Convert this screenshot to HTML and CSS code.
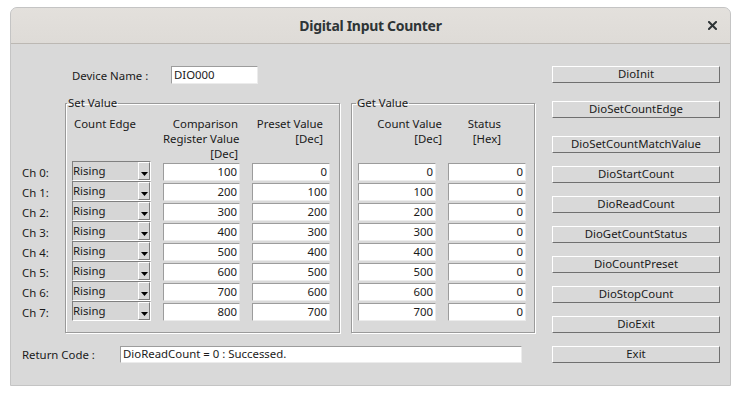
FILE: index.html
```html
<!DOCTYPE html>
<html>
<head>
<meta charset="utf-8">
<link rel="stylesheet" href="styles.css">
</head>
<body>
<div class="window">
  <div class="titlebar">
    <span></span>
    <span class="title">Digital Input Counter</span>
    <span class="close"><svg width="9" height="9" viewBox="0 0 9 9"><path d="M1 1 L8 8 M8 1 L1 8" stroke="#2e3436" stroke-width="2" stroke-linecap="square"/></svg></span>
  </div>
  <div class="body">
    <div class="main">
      <div class="device-row">
        <span class="device-label">Device Name :</span>
        <div class="field device-field">DIO000</div>
      </div>
      <div class="groups">
        <div class="channels">
          <div class="ch">Ch 0:</div>
          <div class="ch">Ch 1:</div>
          <div class="ch">Ch 2:</div>
          <div class="ch">Ch 3:</div>
          <div class="ch">Ch 4:</div>
          <div class="ch">Ch 5:</div>
          <div class="ch">Ch 6:</div>
          <div class="ch">Ch 7:</div>
        </div>
        <fieldset class="group set-group">
          <legend>Set Value</legend>
          <div class="grid set-grid">
            <div class="hdr hdr-edge">Count Edge</div>
            <div class="hdr hdr-comp">Comparison<br>Register Value<br>[Dec]</div>
            <div class="hdr hdr-preset">Preset Value<br>[Dec]</div>

            <div class="combo"><span class="combo-text">Rising</span><span class="combo-btn"><svg width="7" height="4" viewBox="0 0 7 4"><polygon points="0,0 7,0 3.5,4" fill="#000"/></svg></span></div>
            <div class="field num">100</div>
            <div class="field num">0</div>

            <div class="combo"><span class="combo-text">Rising</span><span class="combo-btn"><svg width="7" height="4" viewBox="0 0 7 4"><polygon points="0,0 7,0 3.5,4" fill="#000"/></svg></span></div>
            <div class="field num">200</div>
            <div class="field num">100</div>

            <div class="combo"><span class="combo-text">Rising</span><span class="combo-btn"><svg width="7" height="4" viewBox="0 0 7 4"><polygon points="0,0 7,0 3.5,4" fill="#000"/></svg></span></div>
            <div class="field num">300</div>
            <div class="field num">200</div>

            <div class="combo"><span class="combo-text">Rising</span><span class="combo-btn"><svg width="7" height="4" viewBox="0 0 7 4"><polygon points="0,0 7,0 3.5,4" fill="#000"/></svg></span></div>
            <div class="field num">400</div>
            <div class="field num">300</div>

            <div class="combo"><span class="combo-text">Rising</span><span class="combo-btn"><svg width="7" height="4" viewBox="0 0 7 4"><polygon points="0,0 7,0 3.5,4" fill="#000"/></svg></span></div>
            <div class="field num">500</div>
            <div class="field num">400</div>

            <div class="combo"><span class="combo-text">Rising</span><span class="combo-btn"><svg width="7" height="4" viewBox="0 0 7 4"><polygon points="0,0 7,0 3.5,4" fill="#000"/></svg></span></div>
            <div class="field num">600</div>
            <div class="field num">500</div>

            <div class="combo"><span class="combo-text">Rising</span><span class="combo-btn"><svg width="7" height="4" viewBox="0 0 7 4"><polygon points="0,0 7,0 3.5,4" fill="#000"/></svg></span></div>
            <div class="field num">700</div>
            <div class="field num">600</div>

            <div class="combo"><span class="combo-text">Rising</span><span class="combo-btn"><svg width="7" height="4" viewBox="0 0 7 4"><polygon points="0,0 7,0 3.5,4" fill="#000"/></svg></span></div>
            <div class="field num">800</div>
            <div class="field num">700</div>
          </div>
        </fieldset>
        <fieldset class="group get-group">
          <legend>Get Value</legend>
          <div class="grid get-grid">
            <div class="hdr hdr-count">Count Value<br>[Dec]</div>
            <div class="hdr hdr-status">Status<br>[Hex]</div>

            <div class="field num">0</div><div class="field num">0</div>
            <div class="field num">100</div><div class="field num">0</div>
            <div class="field num">200</div><div class="field num">0</div>
            <div class="field num">300</div><div class="field num">0</div>
            <div class="field num">400</div><div class="field num">0</div>
            <div class="field num">500</div><div class="field num">0</div>
            <div class="field num">600</div><div class="field num">0</div>
            <div class="field num">700</div><div class="field num">0</div>
          </div>
        </fieldset>
      </div>
      <div class="return-row">
        <span class="return-label">Return Code :</span>
        <div class="field return-field">DioReadCount = 0 : Successed.</div>
      </div>
    </div>
    <div class="buttons">
      <div class="btn">DioInit</div>
      <div class="btn wide-gap">DioSetCountEdge</div>
      <div class="btn wide-gap">DioSetCountMatchValue</div>
      <div class="btn">DioStartCount</div>
      <div class="btn">DioReadCount</div>
      <div class="btn">DioGetCountStatus</div>
      <div class="btn">DioCountPreset</div>
      <div class="btn">DioStopCount</div>
      <div class="btn">DioExit</div>
      <div class="btn">Exit</div>
    </div>
  </div>
</div>
</body>
</html>
```
FILE: styles.css
```css
* { box-sizing: border-box; }

html, body {
  margin: 0;
  padding: 0;
  background: #ffffff;
}

body {
  font-family: "Noto Sans", "DejaVu Sans", sans-serif;
  font-size: 11.4px;
  color: #1a1a1a;
}

.window {
  margin: 7px 0 0 10px;
  width: 721px;
  border: 1px solid #c4c4c4;
  border-radius: 7px 7px 0 0;
  overflow: hidden;
  background: #d9d9d9;
}

.titlebar {
  height: 36px;
  display: grid;
  grid-template-columns: 1fr auto 1fr;
  align-items: center;
  background: linear-gradient(#e3e0dc, #dedbd7);
  border-bottom: 1px solid #bcb8b3;
}

.title {
  font-family: "Noto Sans", sans-serif;
  font-weight: 700;
  font-size: 14px;
  letter-spacing: -0.3px;
  color: #2e3436;
  line-height: 16px;
}

.close {
  justify-self: end;
  margin-right: 13px;
  display: flex;
  align-items: center;
}

.body {
  display: flex;
  height: 341px;
}

.main {
  width: 540px;
  display: flex;
  flex-direction: column;
}

.field {
  background: #ffffff;
  border: 1px solid;
  border-color: #9c9c9c #ececec #ececec #9c9c9c;
  line-height: 15px;
  white-space: nowrap;
  overflow: hidden;
}

.device-row {
  margin-top: 22px;
  padding-left: 61px;
  display: flex;
  align-items: center;
}

.device-label {
  width: 99px;
}

.device-field {
  width: 87px;
  height: 18px;
  padding-left: 2px;
}

.groups {
  margin-top: 12px;
  display: flex;
  align-items: flex-start;
}

.channels {
  width: 54px;
  padding-left: 11px;
  padding-top: 67px;
}

.ch {
  height: 20px;
  line-height: 20px;
}

.group {
  margin: 0;
  min-width: 0;
  padding: 6px 9px 11px 6px;
  border: 1px solid #9a9a9a;
  box-shadow: 1px 1px 0 #ffffff, inset 1px 1px 0 #ffffff;
}

.group legend {
  padding: 0 1px;
  margin-left: -5px;
  line-height: 14px;
  font-size: 11.4px;
}

.get-group {
  margin-left: 11px;
  padding-right: 8px;
}

.get-group legend {
  margin-left: -2px;
}

.grid {
  display: grid;
  grid-template-rows: 45px repeat(8, 20px);
  column-gap: 12px;
}

.set-grid {
  grid-template-columns: 79px 77px 78px;
}

.get-grid {
  grid-template-columns: 78px 78px;
}

.hdr {
  line-height: 15px;
  white-space: nowrap;
}

.hdr-edge {
  padding-left: 2px;
}

.hdr-comp {
  text-align: right;
  padding-right: 2px;
}

.hdr-preset {
  text-align: right;
  padding-right: 7px;
}

.hdr-count {
  text-align: right;
  margin-right: -6px;
}

.hdr-status {
  text-align: right;
  padding-right: 25px;
}

.num {
  height: 18px;
  align-self: end;
  text-align: right;
  padding-right: 2px;
}

.combo {
  display: flex;
  height: 20px;
  border: 1px solid;
  border-color: #808080 #ffffff #ffffff #808080;
  background: #d6d6d6;
}

.combo-text {
  flex: 1;
  line-height: 17px;
  padding-left: 0;
}

.combo-btn {
  width: 12px;
  border: 1px solid;
  border-color: #ffffff #7a7a7a #7a7a7a #ffffff;
  display: flex;
  justify-content: center;
  align-items: flex-end;
  padding-bottom: 3px;
}

.return-row {
  margin-top: 13px;
  padding-left: 11px;
  display: flex;
  align-items: center;
}

.return-label {
  width: 98px;
}

.return-field {
  width: 402px;
  height: 17px;
  padding-left: 2px;
  line-height: 14px;
}

.buttons {
  margin-left: 1px;
  padding-top: 22px;
  display: flex;
  flex-direction: column;
  gap: 13px;
}

.btn {
  width: 168px;
  height: 17px;
  border: 1px solid;
  border-color: #ffffff #6f6f6f #6f6f6f #ffffff;
  text-align: center;
  line-height: 14px;
  white-space: nowrap;
}

.wide-gap {
  margin-top: 5px;
}
```
